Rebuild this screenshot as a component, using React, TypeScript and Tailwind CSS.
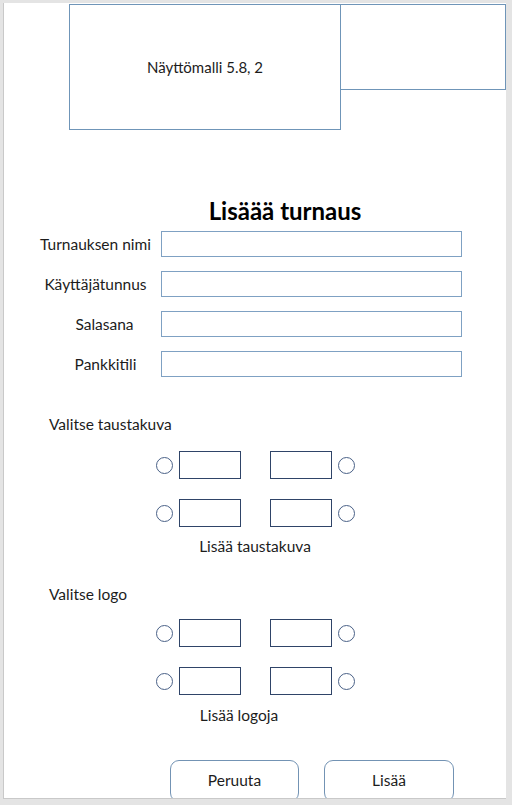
const fields = [
  { label: 'Turnauksen nimi', pad: '' },
  { label: 'Käyttäjätunnus', pad: '' },
  { label: 'Salasana', pad: 'pl-[18px]' },
  { label: 'Pankkitili', pad: 'pl-[20px]' },
];

const Radio = () => (
  <span className="block w-[17px] h-[17px] rounded-full border border-[#4a6187] shrink-0" />
);

const Thumb = () => <span className="block w-[62px] h-[28px] border border-[#2f4468] shrink-0" />;

const ChoiceRow = () => (
  <div className="flex items-center ml-[152px]">
    <Radio />
    <span className="ml-[6px]"><Thumb /></span>
    <span className="ml-[29px]"><Thumb /></span>
    <span className="ml-[6px]"><Radio /></span>
  </div>
);

const App = () => {
  return (
    <div className="w-[512px] h-[805px] bg-[#e4e4e4] pl-[3px] pt-[3px] pr-[6px] pb-[6px]">
      <div
        className="h-full bg-white border-l border-b border-[#c9c9c9] overflow-hidden text-[15.5px] text-[#1c1c1c]"
        style={{ fontFamily: 'Lato, "Liberation Sans", sans-serif' }}
      >
        {/* top preview boxes */}
        <div className="flex items-start ml-[65px] mt-px">
          <div className="w-[272px] h-[126px] shrink-0 border border-[#6f95b8] flex items-center justify-center text-[15px]">
            Näyttömalli 5.8, 2
          </div>
          <div className="w-[166px] h-[86px] -ml-px border border-[#6f95b8] shrink-0" />
        </div>

        <h1 className="mt-[67px] pl-[60px] text-center text-[24px] leading-[28px] font-bold text-black">
          Lisäää turnaus
        </h1>

        <div className="mt-[6px] flex flex-col gap-[14px]">
          {fields.map((f) => (
            <div key={f.label} className="flex items-center">
              <div className={`ml-[29px] w-[125px] text-center leading-[20px] ${f.pad}`}>{f.label}</div>
              <div className="ml-[3px] w-[301px] h-[26px] border border-[#7fa1c3]" />
            </div>
          ))}
        </div>

        <div className="mt-[37px] pl-[45px] leading-[20px]">Valitse taustakuva</div>
        <div className="mt-[17px] flex flex-col gap-[20px]">
          <ChoiceRow />
          <ChoiceRow />
        </div>
        <div className="mt-[9px] text-center leading-[20px]">Lisää taustakuva</div>

        <div className="mt-[28px] pl-[45px] leading-[20px]">Valitse logo</div>
        <div className="mt-[15px] flex flex-col gap-[20px]">
          <ChoiceRow />
          <ChoiceRow />
        </div>
        <div className="mt-[10px] pr-[32px] text-center leading-[20px]">Lisää logoja</div>

        <div className="mt-[35px] ml-[166px] flex gap-[25px]">
          <button className="w-[129px] h-[42px] rounded-[9px] border border-[#7393b4] text-[15.5px]">
            Peruuta
          </button>
          <button className="w-[130px] h-[42px] rounded-[9px] border border-[#7393b4] text-[15.5px]">
            Lisää
          </button>
        </div>
      </div>
    </div>
  );
};

export default App;
